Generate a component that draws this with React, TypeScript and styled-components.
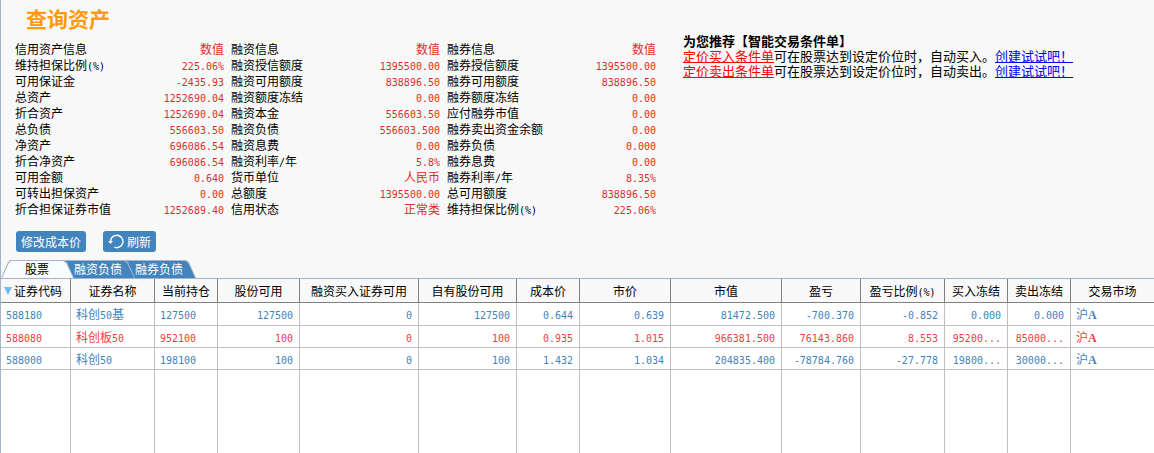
import React, { useState } from "react";
import styled, { createGlobalStyle, css } from "styled-components";

const cjk = `"Noto Sans CJK SC", sans-serif`;
const mono = `"DejaVu Sans Mono", "Noto Sans CJK SC", monospace`;

const GlobalStyle = createGlobalStyle`
  * { box-sizing: border-box; }
  body { margin: 0; background: #f8f8f8; }
`;

const Page = styled.main`
  min-height: 100vh;
  min-width: 1130px;
  display: flex;
  flex-direction: column;
  border-left: 1px solid #a6b3c9;
  color: #000;
  font: 12px/16px ${cjk};
`;

const Summary = styled.section`
  display: flex;
  align-items: flex-start;
  gap: 26px;
  padding-left: 14px;
`;

const Title = styled.h1`
  margin: 0 0 9px;
  padding: 4px 0 0 11px;
  color: #ff9a0c;
  font: 700 21px/28px ${cjk};
`;

const InfoTable = styled.table`
  border-collapse: collapse;
  table-layout: fixed;
  width: 642px;
`;

const InfoLabel = styled.th`
  width: 136px;
  height: 16px;
  padding: 0;
  text-align: left;
  font-weight: 400;
  white-space: nowrap;
`;

const InfoValue = styled.td`
  width: 80px;
  padding: 0 7px 0 0;
  color: #dd2e2e;
  text-align: right;
  white-space: nowrap;

  &:last-child {
    width: 74px;
    padding-right: 1px;
  }
`;

const Figure = styled.span`
  font: 10px/10px ${mono};
`;

const Advice = styled.div`
  padding-top: 33px;
  font-size: 13px;
  line-height: 15px;
  white-space: nowrap;

  h2 { margin: 0; font: inherit; font-weight: 700; }
  p { margin: 0; }
`;

const AdviceLink = styled.a<{ $color: string }>`
  color: ${(p) => p.$color};
  text-decoration: underline;
`;

const Actions = styled.div`
  display: flex;
  gap: 17px;
  padding: 14px 0 8px 15px;
`;

const ActionButton = styled.button`
  display: inline-flex;
  align-items: center;
  gap: 3px;
  height: 21px;
  padding: 0 5px;
  border: 0;
  border-radius: 3px;
  background: #4184be;
  color: #fff;
  font: 12px/16px ${cjk};
  white-space: nowrap;
`;

const TabList = styled.div`
  display: flex;
  border-bottom: 1px solid #a6b3c9;
`;

const Tab = styled.button<{ $active: boolean; $level: number }>`
  position: relative;
  z-index: ${(p) => p.$level};
  height: 18px;
  padding: 0 13px 0 10px;
  margin-left: -10px;
  border: 0;
  background: none;
  isolation: isolate;
  color: ${(p) => (p.$active ? "#000" : "#fff")};
  font: 12px/16px ${cjk};

  &:first-child {
    margin-left: 0;
    padding: 0 25px 0 24px;
  }

  &::before,
  &::after {
    content: "";
    position: absolute;
    z-index: -1;
    inset: 0;
    background: #a6b3c9;
    clip-path: polygon(0 100%, 7px 12%, 9px 0, calc(100% - 10px) 0, calc(100% - 7px) 12%, 100% 100%);
  }

  &::after {
    inset: 1px 1px 0;
    background: ${(p) => (p.$active ? "#f9fdff" : "#4184be")};
  }

  &:not(:first-child)::before,
  &:not(:first-child)::after {
    clip-path: polygon(0 100%, 0 0, calc(100% - 10px) 0, calc(100% - 7px) 12%, 100% 100%);
  }
`;

const Grid = styled.table`
  flex: 1;
  width: 100%;
  table-layout: fixed;
  border-collapse: separate;
  border-spacing: 0;
  background: #fff;
`;

const HeadCell = styled.th`
  height: 24px;
  padding: 0;
  border-right: 1px solid #808080;
  border-bottom: 1px solid #808080;
  background: #f8f8f8;
  font-weight: 400;
  white-space: nowrap;

  &:first-child {
    padding-left: 3px;
    text-align: left;
  }
  &:last-child { border-right: 0; }
`;

const HeadLabel = styled.span`
  display: inline-flex;
  align-items: center;
  gap: 2px;
`;

const SortMark = styled.i`
  border: 4px solid transparent;
  border-top: 8px solid #74b9f2;
  border-bottom: 0;
`;

const BodyRow = styled.tr<{ $gain: boolean }>`
  height: 22px;
  color: ${(p) => (p.$gain ? "#f53d3d" : "#4184be")};

  &:first-child { height: 23px; }
`;

const cellLines = css`
  border-right: 1px solid #c0c0c0;
  &:last-child { border-right: 0; }
`;

const Cell = styled.td<{ $right: boolean }>`
  ${cellLines}
  padding: 0 6px 0 5px;
  border-bottom: 1px solid #c0c0c0;
  text-align: ${(p) => (p.$right ? "right" : "left")};
  white-space: nowrap;
  overflow: hidden;
`;

const FillCell = styled.td`
  ${cellLines}
  padding: 0;
`;

const Market = styled.b`
  font: 700 12px/12px "Liberation Serif", serif;
`;

/* Latin runs are set in the narrow fixed-pitch face, Chinese runs in the text face. */
const Mixed = ({ text }: { text: string }) => (
  <>
    {text.split(/([\x20-\x7e]+)/).map((run, i) =>
      i % 2 ? <Figure key={i}>{run}</Figure> : run
    )}
  </>
);

const info = [
  ["信用资产信息", "数值", "融资信息", "数值", "融券信息", "数值"],
  ["维持担保比例(%)", "225.06%", "融资授信额度", "1395500.00", "融券授信额度", "1395500.00"],
  ["可用保证金", "-2435.93", "融资可用额度", "838896.50", "融券可用额度", "838896.50"],
  ["总资产", "1252690.04", "融资额度冻结", "0.00", "融券额度冻结", "0.00"],
  ["折合资产", "1252690.04", "融资本金", "556603.50", "应付融券市值", "0.00"],
  ["总负债", "556603.50", "融资负债", "556603.500", "融券卖出资金余额", "0.00"],
  ["净资产", "696086.54", "融资息费", "0.00", "融券负债", "0.000"],
  ["折合净资产", "696086.54", "融资利率/年", "5.8%", "融券息费", "0.00"],
  ["可用金额", "0.640", "货币单位", "人民币", "融券利率/年", "8.35%"],
  ["可转出担保资产", "0.00", "总额度", "1395500.00", "总可用额度", "838896.50"],
  ["折合担保证券市值", "1252689.40", "信用状态", "正常类", "维持担保比例(%)", "225.06%"],
];

const columns: [string, number | undefined][] = [
  ["证券代码", 70],
  ["证券名称", 84],
  ["当前持仓", 63],
  ["股份可用", 82],
  ["融资买入证券可用", 119],
  ["自有股份可用", 98],
  ["成本价", 63],
  ["市价", 91],
  ["市值", 111],
  ["盈亏", 79],
  ["盈亏比例(%)", 84],
  ["买入冻结", 63],
  ["卖出冻结", 63],
  ["交易市场", undefined],
];

const holdings = [
  ["588180", "科创50基", "127500", "127500", "0", "127500", "0.644", "0.639", "81472.500", "-700.370", "-0.852", "0.000", "0.000"],
  ["588080", "科创板50", "952100", "100", "0", "100", "0.935", "1.015", "966381.500", "76143.860", "8.553", "95200...", "85000..."],
  ["588000", "科创50", "198100", "100", "0", "100", "1.432", "1.034", "204835.400", "-78784.760", "-27.778", "19800...", "30000..."],
];

const tabs = ["股票", "融资负债", "融券负债"];

const RefreshIcon = () => (
  <svg width="16" height="15" viewBox="0 0 16 15" fill="none" stroke="#fff" aria-hidden="true">
    <path d="M2.6 8A6.2 6.2 0 1 1 6.4 13.2" strokeWidth="1.4" />
    <path d="M0 7h5L2.5 10z" fill="#fff" stroke="none" />
  </svg>
);

export default function App() {
  const [active, setActive] = useState(0);
  return (
    <>
      <GlobalStyle />
      <Page>
        <Summary>
          <div>
            <Title>查询资产</Title>
            <InfoTable>
              <tbody>
                {info.map((row, r) => (
                  <tr key={r}>
                    {row.map((text, c) =>
                      c % 2 ? (
                        <InfoValue key={c}><Mixed text={text} /></InfoValue>
                      ) : (
                        <InfoLabel key={c} scope="row"><Mixed text={text} /></InfoLabel>
                      )
                    )}
                  </tr>
                ))}
              </tbody>
            </InfoTable>
          </div>
          <Advice>
            <h2>为您推荐【智能交易条件单】</h2>
            <p>
              <AdviceLink href="#buy" $color="#ff0000">定价买入条件单</AdviceLink>
              可在股票达到设定价位时，自动买入。
              <AdviceLink href="#create-buy" $color="#0000ff">创建试试吧！</AdviceLink>
            </p>
            <p>
              <AdviceLink href="#sell" $color="#ff0000">定价卖出条件单</AdviceLink>
              可在股票达到设定价位时，自动卖出。
              <AdviceLink href="#create-sell" $color="#0000ff">创建试试吧！</AdviceLink>
            </p>
          </Advice>
        </Summary>
        <Actions>
          <ActionButton type="button">修改成本价</ActionButton>
          <ActionButton type="button"><RefreshIcon />刷新</ActionButton>
        </Actions>
        <TabList role="tablist">
          {tabs.map((name, i) => (
            <Tab
              key={name}
              type="button"
              role="tab"
              aria-selected={i === active}
              $active={i === active}
              $level={tabs.length - i}
              onClick={() => setActive(i)}
            >
              {name}
            </Tab>
          ))}
        </TabList>
        <Grid>
          <colgroup>
            {columns.map(([name, width]) => <col key={name} width={width} />)}
          </colgroup>
          <thead>
            <tr>
              {columns.map(([name], i) => (
                <HeadCell key={name} scope="col">
                  <HeadLabel>{i === 0 && <SortMark />}<span><Mixed text={name} /></span></HeadLabel>
                </HeadCell>
              ))}
            </tr>
          </thead>
          <tbody>
            {holdings.map((row, r) => (
              <BodyRow key={row[0]} $gain={r === 1}>
                {row.map((text, c) => <Cell key={c} $right={c > 2}><Mixed text={text} /></Cell>)}
                <Cell $right={false}>沪<Market>A</Market></Cell>
              </BodyRow>
            ))}
            <tr aria-hidden="true">
              {columns.map(([name]) => <FillCell key={name} />)}
            </tr>
          </tbody>
        </Grid>
      </Page>
    </>
  );
}
